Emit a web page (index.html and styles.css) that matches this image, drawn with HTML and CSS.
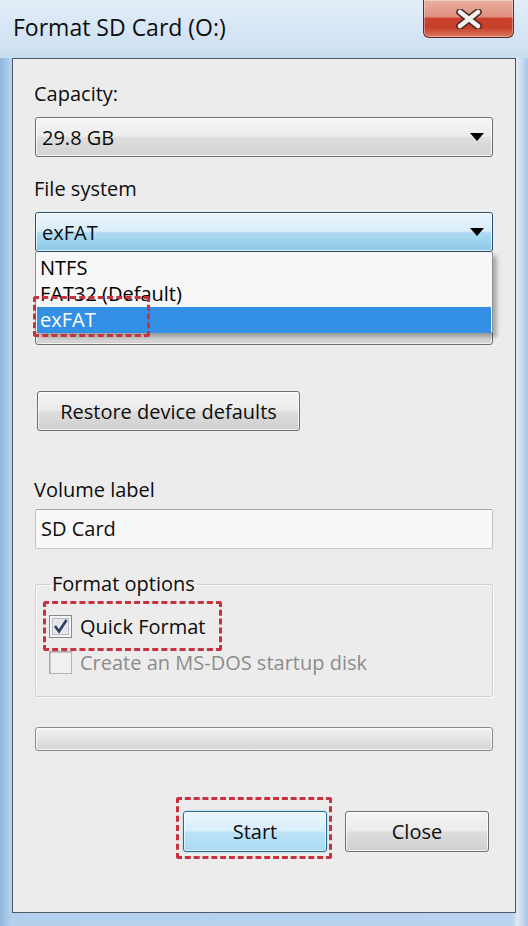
FILE: index.html
```html
<!DOCTYPE html>
<html lang="en">
<head>
<meta charset="utf-8">
<title>Format SD Card (O:)</title>
<link rel="stylesheet" href="styles.css">
</head>
<body>
<div class="window">
  <div class="titlebar">
    <span class="title">Format SD Card (O:)</span>
    <div class="close-btn">
      <svg width="26" height="20" viewBox="0 0 26 20">
        <path d="M4 3 L22 17 M22 3 L4 17" stroke="#4a2a24" stroke-width="7.5" stroke-linecap="round"/>
        <path d="M4 3 L22 17 M22 3 L4 17" stroke="#f6f2f0" stroke-width="4.5" stroke-linecap="round"/>
      </svg>
    </div>
  </div>
  <div class="client">
    <div class="lbl lbl-cap">Capacity:</div>
    <div class="combo combo-cap"><span>29.8 GB</span><span class="arrow"></span></div>

    <div class="lbl lbl-fs">File system</div>
    <div class="fs-wrap">
      <div class="combo combo-active"><span>exFAT</span><span class="arrow"></span></div>
      <ul class="droplist">
        <li>NTFS</li>
        <li>FAT32 (Default)</li>
        <li class="sel">exFAT</li>
      </ul>
      <div class="annot annot-exfat"></div>
    </div>

    <div class="combo combo-alloc"></div>

    <div class="btn btn-restore">Restore device defaults</div>

    <div class="lbl lbl-vol">Volume label</div>
    <div class="textbox">SD Card</div>

    <fieldset class="group">
      <legend>Format options</legend>
      <div class="check-row row-quick">
        <svg class="cb" width="23" height="23" viewBox="0 0 23 23">
          <rect x="0.5" y="0.5" width="22" height="22" fill="#f4f4f4" stroke="#8a8a8a"/>
          <rect x="3.5" y="3.5" width="16" height="16" fill="#e4e6ea" stroke="#b8bcc4"/>
          <path d="M6 11 L10 16.5 L17.5 5" fill="none" stroke="#2d3b63" stroke-width="2.6"/>
        </svg>
        <span>Quick Format</span>
        <div class="annot annot-quick"></div>
      </div>
      <div class="check-row row-dos">
        <svg class="cb" width="23" height="23" viewBox="0 0 23 23">
          <rect x="0.5" y="0.5" width="22" height="22" fill="#f0f0f0" stroke="#b4b4b4"/>
          <path d="M1 22 V1 H22" fill="none" stroke="#9a9a9a"/>
        </svg>
        <span class="disabled">Create an MS-DOS startup disk</span>
      </div>
    </fieldset>

    <div class="progress"></div>

    <div class="actions">
      <div class="start-wrap">
        <div class="btn btn-start">Start</div>
        <div class="annot annot-start"></div>
      </div>
      <div class="btn btn-close">Close</div>
    </div>
  </div>
</div>
</body>
</html>
```

FILE: styles.css
```css
html, body {
  margin: 0;
  padding: 0;
}
body {
  width: 528px;
  height: 926px;
  overflow: hidden;
  font-family: "Open Sans", "Noto Sans", "DejaVu Sans", sans-serif;
  color: #0d0d0d;
}
.window {
  width: 528px;
  height: 926px;
  box-sizing: border-box;
  display: flex;
  flex-direction: column;
  padding: 0 12px 13px 12px;
  background: linear-gradient(90deg, #8fb8df 0%, #b4d0ec 2%, #b9d3ee 97%, #dfeaf6 98%, #a7c6e6 100%);
}
.titlebar {
  height: 58px;
  margin: 0 -12px;
  padding: 0 14px 0 13px;
  display: flex;
  justify-content: space-between;
  align-items: flex-start;
  background: linear-gradient(180deg, #e3eef9 0%, #d4e4f4 60%, #cadef1 100%);
}
.title {
  margin-top: 12px;
  font-size: 23px;
  line-height: 31px;
  color: #0d0d0d;
}
.close-btn {
  width: 91px;
  height: 38px;
  box-sizing: border-box;
  border: 1px solid #5b2e2a;
  border-top: none;
  border-radius: 0 0 6px 6px;
  background: linear-gradient(180deg, #e9b1a3 0%, #df8f7e 45%, #c9412c 50%, #c6402b 75%, #dc7a61 100%);
  display: flex;
  align-items: center;
  justify-content: center;
  box-shadow: inset 0 0 0 1px rgba(255,255,255,0.35);
}
.client {
  flex: 1;
  background: #ececec;
  border: 1px solid #4d5967;
  padding: 0 22px;
  display: flex;
  flex-direction: column;
}
.lbl {
  font-size: 20px;
  line-height: 26px;
  margin-left: -1px;
}
.lbl-cap { margin-top: 22px; }
.lbl-fs { margin-top: 19px; }
.lbl-vol { margin-top: 46px; }

.combo {
  height: 40px;
  box-sizing: border-box;
  border: 1px solid #6f6f6f;
  border-radius: 3px;
  display: flex;
  align-items: center;
  justify-content: space-between;
  padding: 0 8px 0 6px;
  font-size: 20px;
  background: linear-gradient(180deg, #f6f6f6 0%, #ececec 48%, #dedede 52%, #d3d3d3 100%);
  box-shadow: inset 0 0 0 1px rgba(255,255,255,0.7);
}
.combo-cap { margin-top: 10px; }
.combo-alloc { margin-top: 53px; }
.combo-active {
  border-color: #27506f;
  background: linear-gradient(180deg, #eaf5fc 0%, #d9edf9 48%, #b0dbf3 52%, #8cc8e8 100%);
}
.arrow {
  width: 0;
  height: 0;
  border-left: 7px solid transparent;
  border-right: 7px solid transparent;
  border-top: 8px solid #000;
}
.fs-wrap {
  position: relative;
  margin-top: 10px;
}
.droplist {
  position: absolute;
  left: 0;
  top: 100%;
  width: 458px;
  height: 81px;
  box-sizing: border-box;
  margin: 0;
  padding: 3px 1px 0 1px;
  list-style: none;
  background: #f7f7f7;
  border: 1px solid #8f8f8f;
  border-top: none;
  box-shadow: 4px 4px 4px rgba(0,0,0,0.28);
  z-index: 2;
  font-size: 20px;
}
.droplist li {
  height: 26px;
  line-height: 26px;
  padding-left: 3px;
  color: #000;
}
.droplist li.sel {
  background: #3390e4;
  color: #fff;
}
.annot {
  position: absolute;
  border: 3px dashed #c8323f;
  border-radius: 3px;
  box-sizing: border-box;
  z-index: 3;
  pointer-events: none;
}
.annot-exfat {
  left: -2px;
  top: 84px;
  width: 117px;
  height: 41px;
}
.btn {
  height: 40px;
  box-sizing: border-box;
  border: 1px solid #6f6f6f;
  border-radius: 3px;
  display: flex;
  align-items: center;
  justify-content: center;
  font-size: 20px;
  background: linear-gradient(180deg, #f4f4f4 0%, #ebebeb 48%, #dddddd 52%, #cfcfcf 100%);
  box-shadow: inset 0 0 0 1px rgba(255,255,255,0.75);
}
.btn-restore {
  margin-top: 46px;
  margin-left: 2px;
  width: 263px;
}
.textbox {
  margin-top: 6px;
  height: 40px;
  box-sizing: border-box;
  border: 1px solid #c4c4c4;
  border-top-color: #a9a9a9;
  border-radius: 2px;
  background: #f8f8f8;
  font-size: 20px;
  line-height: 38px;
  padding-left: 5px;
}
.group {
  margin: 22px 0 0 0;
  padding: 16px 12px 20px 13px;
  border: 1px solid #cfd3d6;
  border-radius: 3px;
  box-shadow: inset 1px 1px 0 #fafafa, 1px 1px 0 #fafafa;
  min-width: 0;
  height: 126px;
  box-sizing: border-box;
}
.group legend {
  font-size: 20px;
  line-height: 26px;
  padding: 0 2px;
  margin-left: 1px;
}
.check-row {
  position: relative;
  display: flex;
  align-items: center;
  gap: 8px;
  height: 26px;
  font-size: 20px;
}
.row-dos {
  margin-top: 10px;
}
.disabled {
  color: #8c8c8c;
}
.annot-quick {
  left: -6px;
  top: -12px;
  width: 179px;
  height: 50px;
}
.progress {
  margin-top: 30px;
  height: 24px;
  box-sizing: border-box;
  border: 1px solid #8a8a8a;
  border-radius: 3px;
  background: linear-gradient(180deg, #f4f4f4 0%, #e3e3e3 50%, #d6d6d6 100%);
  box-shadow: inset 0 0 0 1px rgba(255,255,255,0.7);
}
.actions {
  margin-top: 60px;
  padding-right: 4px;
  display: flex;
  justify-content: flex-end;
  gap: 18px;
}
.start-wrap {
  position: relative;
}
.btn-start, .btn-close {
  width: 144px;
  height: 41px;
}
.btn-start {
  border-color: #2a6a8e;
  background: linear-gradient(180deg, #eaf6fd 0%, #d7eefb 48%, #bde3f6 52%, #a7d9f5 100%);
  box-shadow: inset 0 0 0 1px rgba(255,255,255,0.6), 0 0 2px #6fc6ea;
}
.annot-start {
  left: -7px;
  top: -14px;
  width: 156px;
  height: 62px;
}
```
